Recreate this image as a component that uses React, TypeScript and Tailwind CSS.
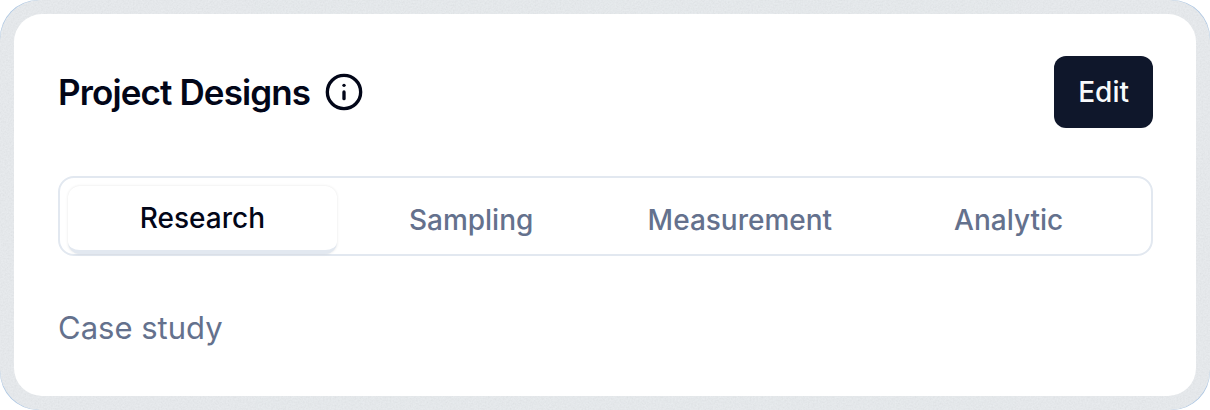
import { useState } from 'react'
import { Info } from 'lucide-react'
import clsx from 'clsx'

const tabs = [
  { id: 'research', label: 'Research', content: 'Case study' },
  { id: 'sampling', label: 'Sampling', content: '' },
  { id: 'measurement', label: 'Measurement', content: '' },
  { id: 'analytic', label: 'Analytic', content: '' },
]

// Fine paper grain laid over the frame colour
function Grain() {
  return (
    <svg className="absolute inset-0 h-full w-full opacity-10" aria-hidden="true">
      <filter id="grain">
        <feTurbulence type="fractalNoise" baseFrequency="0.6" numOctaves="2" stitchTiles="stitch" />
        <feColorMatrix type="saturate" values="0" />
        <feComponentTransfer>
          <feFuncA type="discrete" tableValues="1" />
        </feComponentTransfer>
      </filter>
      <rect width="100%" height="100%" filter="url(#grain)" />
    </svg>
  )
}

export default function App() {
  const [active, setActive] = useState('research')
  const current = tabs.find((tab) => tab.id === active)

  return (
    // The blue layer only shows as a thin edge on the rounded corners
    <div className="rounded-[38px] bg-[#a9c4e2] font-[Inter,sans-serif] text-slate-950">
      <div className="relative overflow-hidden rounded-[40px] bg-[#e9edf0] p-3.5">
        <Grain />
        <section className="relative flex flex-col gap-12 rounded-[28px] bg-white pt-[42px] pr-[43px] pb-11 pl-11">
          <header className="flex items-center justify-between">
            <div className="flex items-center gap-3.5">
              <h1 className="text-[35px] leading-10 font-semibold tracking-tight">Project Designs</h1>
              <button type="button" aria-label="About project designs">
                <Info size={40} />
              </button>
            </div>
            <button type="button" className="h-18 rounded-xl bg-slate-900 px-6 text-[28px] font-medium text-slate-50">
              Edit
            </button>
          </header>

          <div role="tablist" className="grid h-20 grid-cols-4 rounded-2xl border-2 border-slate-200 p-2">
            {tabs.map((tab) => (
              <button
                key={tab.id}
                id={`tab-${tab.id}`}
                type="button"
                role="tab"
                aria-selected={tab.id === active}
                aria-controls="tab-panel"
                onClick={() => setActive(tab.id)}
                className={clsx(
                  'h-17 rounded-xl text-[28px] leading-10 font-medium',
                  tab.id === active
                    ? 'border-b-4 border-slate-200 bg-white shadow-[0_0_3px_rgba(0,0,0,0.1)]'
                    : 'text-[#64718d]'
                )}
              >
                {tab.label}
              </button>
            ))}
          </div>

          <div id="tab-panel" role="tabpanel" aria-labelledby={`tab-${active}`}>
            <p className="min-h-12 text-[31px] leading-12 text-[#64718d]">{current?.content}</p>
          </div>
        </section>
      </div>
    </div>
  )
}
